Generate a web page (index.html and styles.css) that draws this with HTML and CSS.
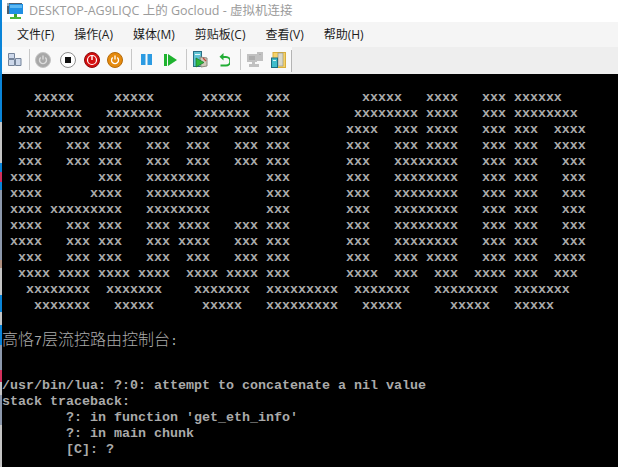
FILE: index.html
```html
<!DOCTYPE html>
<html lang="zh">
<head>
<meta charset="utf-8">
<title>虚拟机连接</title>
<link rel="stylesheet" href="styles.css">
</head>
<body>
<div class="strip"></div>
<div class="window">
  <header class="titlebar">
    <svg class="title-icon" width="17" height="18" viewBox="0 0 17 18">
      <rect x="0" y="1" width="15" height="11" fill="#50606e"/>
      <rect x="2" y="2" width="14" height="10" fill="#1f8fe3"/>
      <rect x="3" y="3" width="12" height="3" fill="#5cb8f2"/>
      <rect x="7" y="12" width="3" height="3" fill="#3da52e"/>
      <rect x="3" y="15" width="11" height="2" fill="#49b83a"/>
      <rect x="0" y="1" width="2" height="3" fill="#9aa5ae"/>
    </svg>
    <span class="title-text">DESKTOP-AG9LIQC 上的 Gocloud - 虚拟机连接</span>
  </header>
  <nav class="menubar">
    <span>文件(F)</span><span>操作(A)</span><span>媒体(M)</span><span>剪贴板(C)</span><span>查看(V)</span><span>帮助(H)</span>
  </nav>
  <div class="toolbar">
    <div class="tools">
      <svg class="m5" width="15" height="15" viewBox="0 0 15 15">
        <path d="M1.5 1.5h6v5h-6zM1.5 7.5h6v6h-6zM8.5 6.5h5.500v7h-5.500z" fill="#cdd8ea" stroke="#75849a"/>
      </svg>
      <i class="sep m7"></i>
      <svg class="m5" width="16" height="16" viewBox="0 0 16 16">
        <circle cx="8" cy="8" r="7.500" fill="#a8a8a8" stroke="#c4c4c4"/>
        <path d="M5.700 5.500a3.500 3.500 0 1 0 4.600 0M8 3.500v4" fill="none" stroke="#dcdcdc" stroke-width="1.400"/>
      </svg>
      <svg class="m9" width="16" height="16" viewBox="0 0 16 16">
        <circle cx="8" cy="8" r="7.500" fill="#fff" stroke="#8f8f8f"/>
        <rect x="5" y="5" width="6" height="6" fill="#111"/>
      </svg>
      <svg class="m8" width="16" height="16" viewBox="0 0 16 16">
        <circle cx="8" cy="8" r="7.500" fill="#d40f0f" stroke="#8e0a0a"/>
        <circle cx="8" cy="8" r="4.500" fill="none" stroke="#fff" stroke-width="1.200"/>
        <path d="M8 4v4" stroke="#fff" stroke-width="1.400"/>
      </svg>
      <svg class="m7" width="16" height="16" viewBox="0 0 16 16">
        <circle cx="8" cy="8" r="7.500" fill="#e58a0e" stroke="#b56b0a"/>
        <path d="M5.700 5.500a3.500 3.500 0 1 0 4.600 0M8 3.500v4" fill="none" stroke="#fff" stroke-width="1.300"/>
      </svg>
      <i class="sep m8"></i>
      <svg class="m9" width="11" height="11" viewBox="0 0 11 11">
        <path d="M0 0h4.500v11H0zM6.500 0H11v11H6.500z" fill="#2c9be2"/>
      </svg>
      <svg class="m12" width="13" height="12" viewBox="0 0 13 12">
        <path d="M0 0h3v12H0zM4 0l9 6-9 6z" fill="#1fb32f"/>
      </svg>
      <i class="sep m9"></i>
      <svg class="m6" width="15" height="17" viewBox="0 0 15 17">
        <rect x="0.500" y="0.500" width="8" height="15" fill="#5fc3d3" stroke="#2b6f86"/>
        <rect x="2" y="3" width="5" height="1" fill="#e6f7fa"/>
        <path d="M7 6l7 1v8l-6 1z" fill="#cfcabb" stroke="#8e8a7e"/>
        <path d="M3 7l8 4.500L3 16z" fill="#2fb83a" stroke="#17752a" stroke-width="0.700"/>
        <path d="M10 7l3 3" stroke="#c8483c" stroke-width="1.200"/>
      </svg>
      <svg class="m11" width="11" height="14" viewBox="0 0 11 14">
        <path d="M3 4h4a3.500 3.500 0 0 1 0 8.500H1.500" fill="none" stroke="#22ad35" stroke-width="2"/>
        <path d="M4.500 0v7.500L0.500 3.700z" fill="#22ad35"/>
      </svg>
      <i class="sep m10"></i>
      <svg class="m6" width="16" height="15" viewBox="0 0 16 15">
        <path d="M0 2h10v8H0zM10 0h6v9h-6zM5 10h3v2H5zM2 12h10v3H2z" fill="#c1c1c1"/>
        <path d="M2 4h6v4H2zM12 2h2v1h-2z" fill="#adadad"/>
      </svg>
      <svg class="m8" width="15" height="16" viewBox="0 0 15 16">
        <rect x="2" y="0.500" width="12.500" height="15" fill="#f5d26a" stroke="#d9ae3c"/>
        <rect x="7" y="1" width="5" height="13" fill="#d8d8cc" stroke="#8d8d80" stroke-width="0.600"/>
        <rect x="0.500" y="6" width="6" height="9.500" fill="#3fbdcb" stroke="#1e6d80"/>
        <rect x="2" y="8" width="3" height="1" fill="#d5f2f6"/>
      </svg>
      <i class="tools-end"></i>
    </div>
  </div>
  <main class="terminal">
    <pre class="art">
    xxxxx     xxxxx      xxxxx   xxx         xxxxx   xxxx   xxx xxxxxx
   xxxxxxx   xxxxxxx    xxxxxxx  xxx        xxxxxxxx xxxx   xxx xxxxxxxx
  xxx  xxxx xxxx xxxx  xxxx  xxx xxx       xxxx  xxx xxxx   xxx xxx  xxxx
  xxx   xxx xxx   xxx  xxx   xxx xxx       xxx   xxx xxxx   xxx xxx  xxxx
  xxx   xxx xxx   xxx  xxx   xxx xxx       xxx   xxxxxxxx   xxx xxx   xxx
 xxxx       xxx   xxxxxxxx       xxx       xxx   xxxxxxxx   xxx xxx   xxx
 xxxx      xxxx   xxxxxxxx       xxx       xxx   xxxxxxxx   xxx xxx   xxx
 xxxx xxxxxxxxx   xxxxxxxx       xxx       xxx   xxxxxxxx   xxx xxx   xxx
 xxxx   xxx xxx   xxx xxxx   xxx xxx       xxx   xxxxxxxx   xxx xxx   xxx
 xxxx   xxx xxx   xxx xxxx   xxx xxx       xxx   xxxxxxxx   xxx xxx   xxx
  xxx   xxx xxx   xxx  xxx   xxx xxx       xxx   xxx xxxx   xxx xxx  xxxx
  xxxx xxxx xxxx xxxx  xxxx xxxx xxx       xxxx  xxx  xxx  xxxx xxx  xxx
   xxxxxxxx  xxxxxxx    xxxxxxx  xxxxxxxxx  xxxxxxx   xxxxxxxx  xxxxxxx
    xxxxxxx   xxxxx      xxxxx   xxxxxxxxx   xxxxx      xxxxx   xxxxx
</pre>
    <p class="console-title"><span class="cjk">高恪</span>7<span class="cjk">层流控路由控制台</span>:</p>
    <pre class="trace">/usr/bin/lua: ?:0: attempt to concatenate a nil value
stack traceback:
        ?: in function 'get_eth_info'
        ?: in main chunk
        [C]: ?</pre>
  </main>
</div>
</body>
</html>
```
FILE: styles.css
```css
html, body {
  margin: 0;
  height: 100%;
  overflow: hidden;
}
body {
  display: flex;
  width: 618px;
  height: 467px;
  background: #000;
}
.strip {
  flex: 0 0 2px;
  background: linear-gradient(to bottom,
    #0a84d8 0 122px, #c4c4c4 122px 163px, #0a84d8 163px 172px, #d2305c 172px 182px,
    #0a84d8 182px 190px, #8c98ac 190px 260px, #b09080 260px 268px, #c4c4c4 268px 295px,
    #0a84d8 295px 312px, #c4c4c4 312px 325px, #0a84d8 325px 345px, #8c98ac 345px 370px,
    #d2305c 370px 382px, #c4c4c4 382px 395px, #8c98ac 395px 425px, #c4c4c4 425px 467px);
}
.window {
  flex: 1;
  min-width: 0;
  display: flex;
  flex-direction: column;
}
.titlebar {
  height: 22px;
  background: #fff;
  display: flex;
  align-items: center;
  padding-left: 5px;
  flex: none;
}
.title-icon {
  flex: none;
}
.title-text {
  margin-left: 5px;
  color: #9b9b9b;
  font: 12.500px/22px "Open Sans", "Noto Sans CJK SC", sans-serif;
  white-space: nowrap;
}
.menubar {
  height: 25px;
  flex: none;
  background: #f5f5f5;
  display: flex;
  align-items: center;
  gap: 20px;
  padding-left: 15px;
  color: #1c1c1c;
  font: 12px/25px "Open Sans", "Noto Sans CJK SC", sans-serif;
}
.toolbar {
  height: 27px;
  flex: none;
  background: #eeeeee;
}
.tools {
  width: 290px;
  height: 25px;
  background: #f9f9f9;
  display: flex;
  align-items: center;
  position: relative;
}
.tools-end {
  margin-left: auto;
  align-self: flex-end;
  width: 1px;
  height: 22px;
  background: #b4b4b4;
}
.sep {
  width: 1px;
  height: 21px;
  background: #c8c8c8;
  flex: none;
}
.tools svg { flex: none; }
.m5 { margin-left: 5px; }
.m6 { margin-left: 6px; }
.m7 { margin-left: 7px; }
.m8 { margin-left: 8px; }
.m9 { margin-left: 9px; }
.m10 { margin-left: 10px; }
.m11 { margin-left: 11px; }
.m12 { margin-left: 12px; }
.terminal {
  flex: 1;
  min-height: 0;
  overflow: hidden;
  background: #000;
  color: #aaaaaa;
  padding-top: 16px;
  font: bold 13.333px/16px "Liberation Mono", "Noto Sans CJK SC", monospace;
}
.art, .trace {
  margin: 0;
  font: inherit;
  white-space: pre;
  tab-size: 8;
}
.art {
  height: 224px;
}
.console-title {
  margin: 16px 0 32px;
  height: 16px;
  white-space: nowrap;
  font-weight: 400;
}
.cjk {
  font: 300 16px/16px "Noto Sans CJK SC", sans-serif;
}
```
